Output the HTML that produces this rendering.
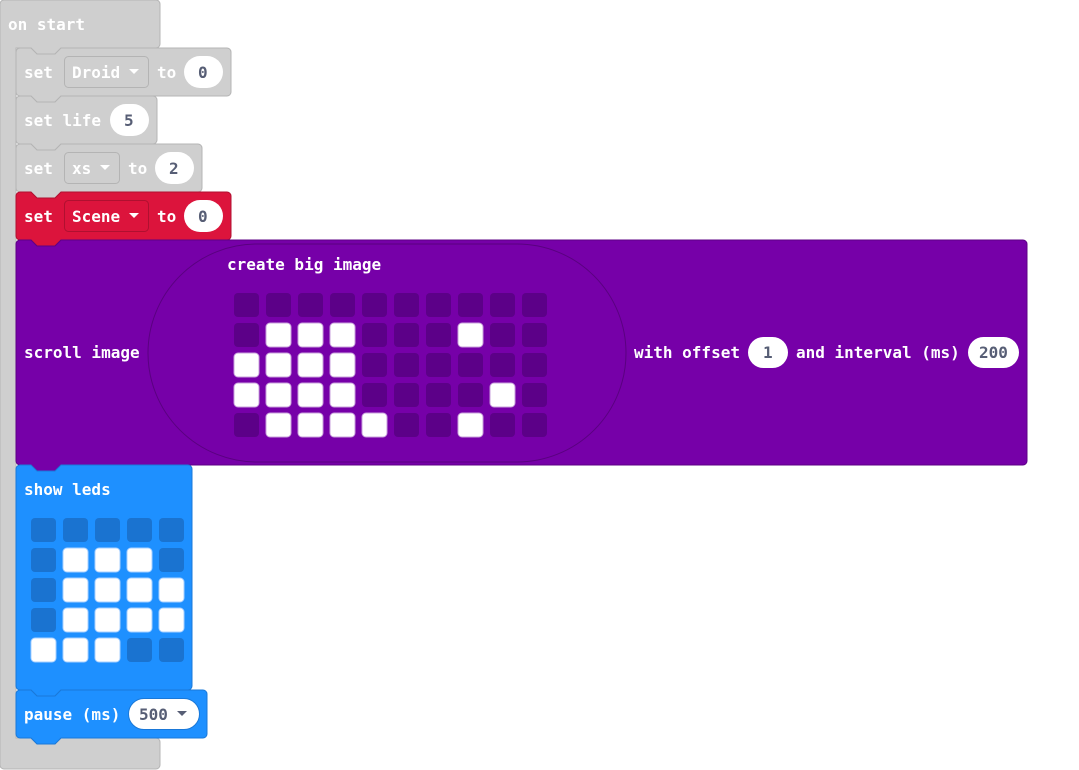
<!DOCTYPE html>
<html><head><meta charset="utf-8"><style>
html,body{margin:0;padding:0;background:#fff;width:1079px;height:770px;overflow:hidden}
text{font-family:"DejaVu Sans Mono","Liberation Mono",monospace;font-weight:bold;font-size:16px}
.w{fill:#fff}.n{fill:#575E75}
</style></head><body>
<svg width="1079" height="770" xmlns="http://www.w3.org/2000/svg">
<!-- on start -->
<path d="M0,4 a4,4 0 0 1 4,-4 H156 a4,4 0 0 1 4,4 V44 a4,4 0 0 1 -4,4 H61 l-6,6 h-18 l-6,-6 H16 V738 H31 l6,6 h18 l6,-6 H156 a4,4 0 0 1 4,4 V765 a4,4 0 0 1 -4,4 H4 a4,4 0 0 1 -4,-4 Z" fill="#cfcfcf" stroke="#b4b4b4"/>
<text x="8" y="30" class="w">on start</text>

<!-- set Droid -->
<path d="M16,52 a4,4 0 0 1 4,-4 H31 l6,6 h18 l6,-6 H227 a4,4 0 0 1 4,4 V92 a4,4 0 0 1 -4,4 H61 l-6,6 h-18 l-6,-6 H20 a4,4 0 0 1 -4,-4 Z" fill="#cfcfcf" stroke="#b4b4b4"/>
<text x="24" y="78" class="w">set</text>
<rect x="64.5" y="56.5" width="84" height="31" rx="4" fill="#cfcfcf" stroke="#b4b4b4"/>
<text x="72" y="78" class="w">Droid</text>
<path d="M129,69 h10 l-5,5 z" fill="#fff"/>
<text x="157" y="78" class="w">to</text>
<rect x="184" y="56" width="39" height="32" rx="16" fill="#fff"/>
<text x="198" y="78" class="n">0</text>

<!-- set life -->
<path d="M16,100 a4,4 0 0 1 4,-4 H31 l6,6 h18 l6,-6 H153 a4,4 0 0 1 4,4 V140 a4,4 0 0 1 -4,4 H61 l-6,6 h-18 l-6,-6 H20 a4,4 0 0 1 -4,-4 Z" fill="#cfcfcf" stroke="#b4b4b4"/>
<text x="24" y="126" class="w">set life</text>
<rect x="110" y="104" width="39" height="32" rx="16" fill="#fff"/>
<text x="124" y="126" class="n">5</text>

<!-- set xs -->
<path d="M16,148 a4,4 0 0 1 4,-4 H31 l6,6 h18 l6,-6 H198 a4,4 0 0 1 4,4 V188 a4,4 0 0 1 -4,4 H61 l-6,6 h-18 l-6,-6 H20 a4,4 0 0 1 -4,-4 Z" fill="#cfcfcf" stroke="#b4b4b4"/>
<text x="24" y="174" class="w">set</text>
<rect x="64.5" y="152.5" width="55" height="31" rx="4" fill="#cfcfcf" stroke="#b4b4b4"/>
<text x="72" y="174" class="w">xs</text>
<path d="M100,165 h10 l-5,5 z" fill="#fff"/>
<text x="128" y="174" class="w">to</text>
<rect x="155" y="152" width="39" height="32" rx="16" fill="#fff"/>
<text x="169" y="174" class="n">2</text>

<!-- set Scene -->
<path d="M16,196 a4,4 0 0 1 4,-4 H31 l6,6 h18 l6,-6 H227 a4,4 0 0 1 4,4 V236 a4,4 0 0 1 -4,4 H61 l-6,6 h-18 l-6,-6 H20 a4,4 0 0 1 -4,-4 Z" fill="#dc143c" stroke="#b01030"/>
<text x="24" y="222" class="w">set</text>
<rect x="64.5" y="200.5" width="84" height="31" rx="4" fill="#dc143c" stroke="#b01030"/>
<text x="72" y="222" class="w">Scene</text>
<path d="M129,213 h10 l-5,5 z" fill="#fff"/>
<text x="157" y="222" class="w">to</text>
<rect x="184" y="200" width="39" height="32" rx="16" fill="#fff"/>
<text x="198" y="222" class="n">0</text>

<!-- scroll image -->
<path d="M16,244 a4,4 0 0 1 4,-4 H31 l6,6 h18 l6,-6 H1023 a4,4 0 0 1 4,4 V461 a4,4 0 0 1 -4,4 H61 l-6,6 h-18 l-6,-6 H20 a4,4 0 0 1 -4,-4 Z" fill="#7600a8" stroke="#5e0086"/>
<rect x="148" y="244" width="478" height="218" rx="109" fill="#7600a8" stroke="#5a0080"/>
<text x="24" y="358" class="w">scroll image</text>
<text x="227" y="270" class="w">create big image</text>
<g fill="#5c0088">
<rect x="234" y="293" width="25" height="24" rx="4"/><rect x="266" y="293" width="25" height="24" rx="4"/><rect x="298" y="293" width="25" height="24" rx="4"/><rect x="330" y="293" width="25" height="24" rx="4"/><rect x="362" y="293" width="25" height="24" rx="4"/><rect x="394" y="293" width="25" height="24" rx="4"/><rect x="426" y="293" width="25" height="24" rx="4"/><rect x="458" y="293" width="25" height="24" rx="4"/><rect x="490" y="293" width="25" height="24" rx="4"/><rect x="522" y="293" width="25" height="24" rx="4"/>
<rect x="234" y="323" width="25" height="24" rx="4"/><rect x="362" y="323" width="25" height="24" rx="4"/><rect x="394" y="323" width="25" height="24" rx="4"/><rect x="426" y="323" width="25" height="24" rx="4"/><rect x="490" y="323" width="25" height="24" rx="4"/><rect x="522" y="323" width="25" height="24" rx="4"/>
<rect x="362" y="353" width="25" height="24" rx="4"/><rect x="394" y="353" width="25" height="24" rx="4"/><rect x="426" y="353" width="25" height="24" rx="4"/><rect x="458" y="353" width="25" height="24" rx="4"/><rect x="490" y="353" width="25" height="24" rx="4"/><rect x="522" y="353" width="25" height="24" rx="4"/>
<rect x="362" y="383" width="25" height="24" rx="4"/><rect x="394" y="383" width="25" height="24" rx="4"/><rect x="426" y="383" width="25" height="24" rx="4"/><rect x="458" y="383" width="25" height="24" rx="4"/><rect x="522" y="383" width="25" height="24" rx="4"/>
<rect x="234" y="413" width="25" height="24" rx="4"/><rect x="394" y="413" width="25" height="24" rx="4"/><rect x="426" y="413" width="25" height="24" rx="4"/><rect x="490" y="413" width="25" height="24" rx="4"/><rect x="522" y="413" width="25" height="24" rx="4"/>
</g>
<g fill="#fff" stroke="#c9a0dc" stroke-width="1">
<rect x="266" y="323" width="25" height="24" rx="4"/><rect x="298" y="323" width="25" height="24" rx="4"/><rect x="330" y="323" width="25" height="24" rx="4"/><rect x="458" y="323" width="25" height="24" rx="4"/>
<rect x="234" y="353" width="25" height="24" rx="4"/><rect x="266" y="353" width="25" height="24" rx="4"/><rect x="298" y="353" width="25" height="24" rx="4"/><rect x="330" y="353" width="25" height="24" rx="4"/>
<rect x="234" y="383" width="25" height="24" rx="4"/><rect x="266" y="383" width="25" height="24" rx="4"/><rect x="298" y="383" width="25" height="24" rx="4"/><rect x="330" y="383" width="25" height="24" rx="4"/><rect x="490" y="383" width="25" height="24" rx="4"/>
<rect x="266" y="413" width="25" height="24" rx="4"/><rect x="298" y="413" width="25" height="24" rx="4"/><rect x="330" y="413" width="25" height="24" rx="4"/><rect x="362" y="413" width="25" height="24" rx="4"/><rect x="458" y="413" width="25" height="24" rx="4"/>
</g>
<text x="634" y="358" class="w">with offset</text>
<rect x="748" y="337" width="40" height="31" rx="15.5" fill="#fff"/>
<text x="763" y="358" class="n">1</text>
<text x="796" y="358" class="w">and interval (ms)</text>
<rect x="968" y="337" width="51" height="31" rx="15.5" fill="#fff"/>
<text x="979" y="358" class="n">200</text>

<!-- show leds -->
<path d="M16,469 a4,4 0 0 1 4,-4 H31 l6,6 h18 l6,-6 H188 a4,4 0 0 1 4,4 V686 a4,4 0 0 1 -4,4 H61 l-6,6 h-18 l-6,-6 H20 a4,4 0 0 1 -4,-4 Z" fill="#1e90ff" stroke="#1a78d8"/>
<text x="24" y="495" class="w">show leds</text>
<g fill="#1a73d0">
<rect x="31" y="518" width="25" height="24" rx="4"/><rect x="63" y="518" width="25" height="24" rx="4"/><rect x="95" y="518" width="25" height="24" rx="4"/><rect x="127" y="518" width="25" height="24" rx="4"/><rect x="159" y="518" width="25" height="24" rx="4"/>
<rect x="31" y="548" width="25" height="24" rx="4"/><rect x="159" y="548" width="25" height="24" rx="4"/>
<rect x="31" y="578" width="25" height="24" rx="4"/>
<rect x="31" y="608" width="25" height="24" rx="4"/>
<rect x="127" y="638" width="25" height="24" rx="4"/><rect x="159" y="638" width="25" height="24" rx="4"/>
</g>
<g fill="#fff" stroke="#a8d0ff">
<rect x="63" y="548" width="25" height="24" rx="4"/><rect x="95" y="548" width="25" height="24" rx="4"/><rect x="127" y="548" width="25" height="24" rx="4"/>
<rect x="63" y="578" width="25" height="24" rx="4"/><rect x="95" y="578" width="25" height="24" rx="4"/><rect x="127" y="578" width="25" height="24" rx="4"/><rect x="159" y="578" width="25" height="24" rx="4"/>
<rect x="63" y="608" width="25" height="24" rx="4"/><rect x="95" y="608" width="25" height="24" rx="4"/><rect x="127" y="608" width="25" height="24" rx="4"/><rect x="159" y="608" width="25" height="24" rx="4"/>
<rect x="31" y="638" width="25" height="24" rx="4"/><rect x="63" y="638" width="25" height="24" rx="4"/><rect x="95" y="638" width="25" height="24" rx="4"/>
</g>

<!-- pause -->
<path d="M16,694 a4,4 0 0 1 4,-4 H31 l6,6 h18 l6,-6 H203 a4,4 0 0 1 4,4 V734 a4,4 0 0 1 -4,4 H61 l-6,6 h-18 l-6,-6 H20 a4,4 0 0 1 -4,-4 Z" fill="#1e90ff" stroke="#1a78d8"/>
<text x="24" y="720" class="w">pause (ms)</text>
<rect x="128.5" y="698.5" width="71" height="31" rx="15.5" fill="#fff" stroke="#1a78d8"/>
<text x="139" y="720" class="n">500</text>
<path d="M177,711 h10 l-5,5 z" fill="#575E75"/>
</svg>
</body></html>
